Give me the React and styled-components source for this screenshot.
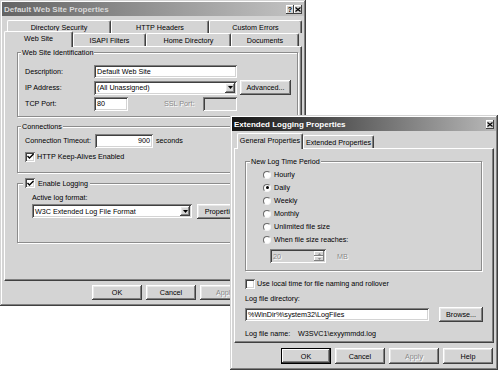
import React from "react";
import styled, { createGlobalStyle, css } from "styled-components";

const FACE = "#d4d4d4";

const GlobalStyle = createGlobalStyle`
  html, body { margin: 0; padding: 0; background: #fff; }
  body {
    font-family: "Liberation Sans", Arial, sans-serif;
    font-size: 7.2px;
    line-height: 9px;
    color: #000;
  }
  * { box-sizing: border-box; }
`;

const raised = css`
  box-shadow: inset -1px -1px 0 #404040, inset 1px 1px 0 #ffffff,
    inset -2px -2px 0 #808080, inset 2px 2px 0 #e8e8e8;
`;

const sunken = css`
  box-shadow: inset 1px 1px 0 #808080, inset -1px -1px 0 #ffffff,
    inset 2px 2px 0 #404040, inset -2px -2px 0 #d4d4d4;
`;

const Desktop = styled.div`
  position: relative;
  width: 500px;
  height: 371px;
  overflow: hidden;
  background: #fff;
`;

// dialogs sit on a free desktop, so they are placed by coordinates
const Window = styled.div`
  position: absolute;
  left: ${(p) => p.$x}px;
  top: ${(p) => p.$y}px;
  width: ${(p) => p.$w}px;
  height: ${(p) => p.$h}px;
  z-index: ${(p) => p.$z || 1};
  display: flex;
  flex-direction: column;
  padding: 2px;
  background: ${FACE};
  box-shadow: inset -1px -1px 0 #404040, inset 1px 1px 0 #d4d4d4,
    inset -2px -2px 0 #808080, inset 2px 2px 0 #ffffff;
`;

const TitleBar = styled.div`
  flex: none;
  height: 14px;
  display: flex;
  align-items: center;
  justify-content: space-between;
  padding: 0 2px;
  background: ${(p) =>
    p.$active
      ? "linear-gradient(to right, #161616, #3c3c3c 25%, #b8b8b8)"
      : "linear-gradient(to right, #646464, #c4c4c4)"};
  color: ${(p) => (p.$active ? "#ffffff" : "#d8d8d8")};
  font-size: 8px;
  font-weight: bold;
  white-space: nowrap;
`;

const TitleButtons = styled.div`
  display: flex;
`;

const TitleButton = styled.div`
  width: 8px;
  height: 9px;
  display: flex;
  align-items: center;
  justify-content: center;
  background: ${FACE};
  box-shadow: inset -1px -1px 0 #404040, inset 1px 1px 0 #ffffff;
  color: #000;
  font-size: 7px;
  font-weight: bold;
`;

const TabArea = styled.div`
  flex: none;
  display: flex;
  flex-direction: column;
  margin-top: 4px;
  padding: 0 2px;
`;

const TabRow = styled.div`
  display: flex;
  align-items: flex-end;
  height: 13px;
  padding-left: ${(p) => p.$indent || 0}px;
`;

const Tab = styled.div`
  position: relative;
  z-index: ${(p) => (p.$selected ? 2 : 1)};
  flex: none;
  width: ${(p) => p.$w}px;
  height: ${(p) => (p.$selected ? 16 : 13)}px;
  margin-bottom: ${(p) => (p.$selected ? -1 : 0)}px;
  display: flex;
  align-items: center;
  justify-content: center;
  padding-bottom: ${(p) => (p.$selected ? 2 : 0)}px;
  background: ${FACE};
  border-top: 1px solid #ffffff;
  border-left: 1px solid #ffffff;
  border-right: 1px solid #404040;
  border-radius: 2px 2px 0 0;
  box-shadow: inset -1px 0 0 #808080;
  white-space: nowrap;
`;

const Panel = styled.div`
  flex: 1;
  margin: 0 2px;
  display: flex;
  flex-direction: column;
  padding: ${(p) => p.$pad};
  border: 1px solid;
  border-color: #ffffff #404040 #404040 #ffffff;
  box-shadow: inset -1px -1px 0 #808080;
`;

const Group = styled.fieldset`
  margin: ${(p) => p.$mt || 0}px 0 0;
  padding: 0;
  min-width: 0;
  border: 1px solid #8c8c8c;
  box-shadow: 1px 1px 0 #ffffff, inset 1px 1px 0 #ffffff;
`;

const GroupBody = styled.div`
  display: flex;
  flex-direction: column;
  align-items: flex-start;
  padding: ${(p) => p.$pad};
`;

const Legend = styled.legend`
  margin-left: ${(p) => p.$ml}px;
  padding: 0 ${(p) => p.$pl || 1}px;
  background: ${FACE};
  line-height: 9px;
`;

const LegendInner = styled.span`
  display: inline-flex;
  align-items: center;
  gap: 3px;
`;

const Row = styled.div`
  display: flex;
  align-items: center;
  height: ${(p) => p.$h || 15}px;
  margin-top: ${(p) => p.$mt || 0}px;
  margin-left: ${(p) => p.$ml || 0}px;
  gap: ${(p) => p.$gap || 0}px;
  white-space: nowrap;
`;

const Label = styled.span`
  flex: none;
  width: ${(p) => (p.$w ? `${p.$w}px` : "auto")};
  margin-left: ${(p) => p.$ml || 0}px;
  color: ${(p) => (p.$disabled ? "#8a8a8a" : "#000")};
  text-shadow: ${(p) => (p.$disabled ? "1px 1px 0 #ffffff" : "none")};
  white-space: nowrap;
`;

const TextBox = styled.div`
  flex: none;
  width: ${(p) => p.$w}px;
  height: ${(p) => p.$h || 13}px;
  display: flex;
  align-items: center;
  justify-content: ${(p) => (p.$right ? "flex-end" : "flex-start")};
  padding: 0 3px;
  background: ${(p) => (p.$disabled ? FACE : "#ffffff")};
  color: ${(p) => (p.$disabled ? "#8a8a8a" : "#000")};
  ${sunken};
  overflow: hidden;
  white-space: nowrap;
`;

const Select = styled.div`
  flex: none;
  width: ${(p) => p.$w}px;
  height: 14px;
  display: flex;
  align-items: stretch;
  padding: 2px;
  background: #ffffff;
  ${sunken};
`;

const SelectText = styled.span`
  flex: 1;
  display: flex;
  align-items: center;
  padding-left: 1px;
  overflow: hidden;
  white-space: nowrap;
`;

const ArrowButton = styled.span`
  flex: none;
  width: 10px;
  display: flex;
  align-items: center;
  justify-content: center;
  background: ${FACE};
  ${raised};
`;

const Spinner = styled.div`
  flex: none;
  width: ${(p) => p.$w}px;
  height: 14px;
  display: flex;
  padding: 2px;
  background: ${FACE};
  ${sunken};
`;

const SpinText = styled.span`
  flex: 1;
  display: flex;
  align-items: center;
  padding-left: 1px;
  color: #8a8a8a;
  text-shadow: 1px 1px 0 #ffffff;
`;

const SpinButtons = styled.span`
  flex: none;
  width: 10px;
  display: flex;
  flex-direction: column;
`;

const SpinHalf = styled.span`
  flex: 1;
  display: flex;
  align-items: center;
  justify-content: center;
  background: ${FACE};
  box-shadow: inset -1px -1px 0 #808080, inset 1px 1px 0 #ffffff;
`;

const Button = styled.div`
  flex: none;
  width: ${(p) => p.$w || 50}px;
  height: ${(p) => p.$h || 15}px;
  margin-left: ${(p) => p.$ml || 0}px;
  display: flex;
  align-items: center;
  justify-content: center;
  background: ${FACE};
  color: ${(p) => (p.$disabled ? "#8a8a8a" : "#000")};
  text-shadow: ${(p) => (p.$disabled ? "1px 1px 0 #ffffff" : "none")};
  ${raised};
  ${(p) =>
    p.$default &&
    css`
      border: 1px solid #000;
      box-shadow: inset -1px -1px 0 #404040, inset 1px 1px 0 #ffffff,
        inset -2px -2px 0 #808080;
    `}
  white-space: nowrap;
`;

const ButtonBar = styled.div`
  flex: none;
  display: flex;
  justify-content: flex-end;
  gap: 4px;
  height: ${(p) => p.$h || 15}px;
  margin: ${(p) => p.$mt}px ${(p) => p.$pr}px ${(p) => p.$mb}px 0;
`;

const CheckBox = styled.span`
  flex: none;
  width: 10px;
  height: 10px;
  display: flex;
  align-items: center;
  justify-content: center;
  background: #ffffff;
  ${sunken};
`;

const Radio = styled.span`
  flex: none;
  width: 8px;
  height: 8px;
  border-radius: 50%;
  display: flex;
  align-items: center;
  justify-content: center;
  background: #ffffff;
  border: 1px solid;
  border-color: #6a6a6a #f4f4f4 #f4f4f4 #6a6a6a;
`;

const RadioDot = styled.span`
  width: 3px;
  height: 3px;
  border-radius: 50%;
  background: #000;
`;

const RadioList = styled.div`
  display: flex;
  flex-direction: column;
`;

const Check = () => (
  <svg width="7" height="7" viewBox="0 0 7 7">
    <path d="M0.5 3 L2.5 5 L6.5 1" fill="none" stroke="#000" strokeWidth="1.4" />
  </svg>
);

const DownArrow = () => (
  <svg width="5" height="3" viewBox="0 0 5 3">
    <path d="M0 0 H5 L2.5 3 Z" fill="#000" />
  </svg>
);

const UpSmall = () => (
  <svg width="3" height="2" viewBox="0 0 3 2">
    <path d="M0 2 H3 L1.5 0 Z" fill="#8a8a8a" />
  </svg>
);

const DownSmall = () => (
  <svg width="3" height="2" viewBox="0 0 3 2">
    <path d="M0 0 H3 L1.5 2 Z" fill="#8a8a8a" />
  </svg>
);

const CloseGlyph = () => (
  <svg width="6" height="5" viewBox="0 0 6 5">
    <path d="M0.5 0.5 L5.5 4.5 M5.5 0.5 L0.5 4.5" stroke="#000" strokeWidth="1.2" />
  </svg>
);

function RadioRow({ label, checked }) {
  return (
    <Row $h={13} $gap={3}>
      <Radio>{checked && <RadioDot />}</Radio>
      <Label>{label}</Label>
    </Row>
  );
}

function WebSiteDialog() {
  return (
    <Window $x={0} $y={0} $w={306} $h={306} $z={1}>
      <TitleBar>
        <span>Default Web Site Properties</span>
        <TitleButtons>
          <TitleButton>?</TitleButton>
          <TitleButton>
            <CloseGlyph />
          </TitleButton>
        </TitleButtons>
      </TitleBar>

      <TabArea>
        <TabRow $indent={3}>
          <Tab $w={104}>Directory Security</Tab>
          <Tab $w={98}>HTTP Headers</Tab>
          <Tab $w={93}>Custom Errors</Tab>
        </TabRow>
        <TabRow>
          <Tab $w={69} $selected>
            Web Site
          </Tab>
          <Tab $w={73}>ISAPI Filters</Tab>
          <Tab $w={85}>Home Directory</Tab>
          <Tab $w={68}>Documents</Tab>
        </TabRow>
      </TabArea>

      <Panel $pad="1px 3px 0 12px">
        <Group>
          <Legend $ml={3}>Web Site Identification</Legend>
          <GroupBody $pad="7px 0 5px 7px">
            <Row>
              <Label $w={69}>Description:</Label>
              <TextBox $w={143}>Default Web Site</TextBox>
            </Row>
            <Row $mt={1}>
              <Label $w={69}>IP Address:</Label>
              <Select $w={143}>
                <SelectText>(All Unassigned)</SelectText>
                <ArrowButton>
                  <DownArrow />
                </ArrowButton>
              </Select>
              <Button $w={51} $ml={3}>
                Advanced...
              </Button>
            </Row>
            <Row $mt={1}>
              <Label $w={69}>TCP Port:</Label>
              <TextBox $w={34} $h={14}>
                80
              </TextBox>
              <Label $w={39} $ml={36} $disabled>
                SSL Port:
              </Label>
              <TextBox $w={34} $h={14} $disabled />
            </Row>
          </GroupBody>
        </Group>

        <Group $mt={5}>
          <Legend $ml={3}>Connections</Legend>
          <GroupBody $pad="2px 0 10px 7px">
            <Row>
              <Label $w={70}>Connection Timeout:</Label>
              <TextBox $w={58} $h={14} $right>
                900
              </TextBox>
              <Label $ml={3}>seconds</Label>
            </Row>
            <Row $h={11} $mt={3} $gap={2}>
              <CheckBox>
                <Check />
              </CheckBox>
              <Label>HTTP Keep-Alives Enabled</Label>
            </Row>
          </GroupBody>
        </Group>

        <Group $mt={5}>
          <Legend $ml={5} $pl={2}>
            <LegendInner>
              <CheckBox>
                <Check />
              </CheckBox>
              Enable Logging
            </LegendInner>
          </Legend>
          <GroupBody $pad="4px 0 23px 14px">
            <Row $h={9}>
              <Label>Active log format:</Label>
            </Row>
            <Row $h={15} $mt={2} $gap={5}>
              <Select $w={160}>
                <SelectText>W3C Extended Log File Format</SelectText>
                <ArrowButton>
                  <DownArrow />
                </ArrowButton>
              </Select>
              <Button $w={54}>Properties...</Button>
            </Row>
          </GroupBody>
        </Group>
      </Panel>

      <ButtonBar $mt={4} $pr={54} $mb={4}>
        <Button>OK</Button>
        <Button>Cancel</Button>
        <Button $disabled>Apply</Button>
      </ButtonBar>
    </Window>
  );
}

function LoggingDialog() {
  return (
    <Window $x={230} $y={115} $w={268} $h={255} $z={2}>
      <TitleBar $active>
        <span>Extended Logging Properties</span>
        <TitleButtons>
          <TitleButton>
            <CloseGlyph />
          </TitleButton>
        </TitleButtons>
      </TitleBar>

      <TabArea>
        <TabRow $indent={3}>
          <Tab $w={66} $selected>
            General Properties
          </Tab>
          <Tab $w={71}>Extended Properties</Tab>
        </TabRow>
      </TabArea>

      <Panel $pad="8px 11px 0 10px">
        <Group>
          <Legend $ml={4}>New Log Time Period</Legend>
          <GroupBody $pad="2px 0 7px 17px">
            <RadioList>
              <RadioRow label="Hourly" />
              <RadioRow label="Daily" checked />
              <RadioRow label="Weekly" />
              <RadioRow label="Monthly" />
              <RadioRow label="Unlimited file size" />
              <RadioRow label="When file size reaches:" />
            </RadioList>
            <Row $mt={3} $ml={7} $h={14}>
              <Spinner $w={56}>
                <SpinText>20</SpinText>
                <SpinButtons>
                  <SpinHalf>
                    <UpSmall />
                  </SpinHalf>
                  <SpinHalf>
                    <DownSmall />
                  </SpinHalf>
                </SpinButtons>
              </Spinner>
              <Label $ml={11} $disabled>
                MB
              </Label>
            </Row>
          </GroupBody>
        </Group>

        <Row $h={11} $mt={7} $gap={2}>
          <CheckBox />
          <Label>Use local time for file naming and rollover</Label>
        </Row>
        <Row $h={9} $mt={5}>
          <Label>Log file directory:</Label>
        </Row>
        <Row $h={15} $mt={4} $gap={10}>
          <TextBox $w={184}>%WinDir%\system32\LogFiles</TextBox>
          <Button $w={44}>Browse...</Button>
        </Row>
        <Row $h={9} $mt={7}>
          <Label $w={53}>Log file name:</Label>
          <Label>W3SVC1\exyymmdd.log</Label>
        </Row>
      </Panel>

      <ButtonBar $mt={5} $pr={3} $mb={4} $h={16}>
        <Button $h={16} $default>
          OK
        </Button>
        <Button $h={16}>Cancel</Button>
        <Button $h={16} $disabled>
          Apply
        </Button>
        <Button $h={16}>Help</Button>
      </ButtonBar>
    </Window>
  );
}

export default function App() {
  return (
    <>
      <GlobalStyle />
      <Desktop>
        <WebSiteDialog />
        <LoggingDialog />
      </Desktop>
    </>
  );
}
